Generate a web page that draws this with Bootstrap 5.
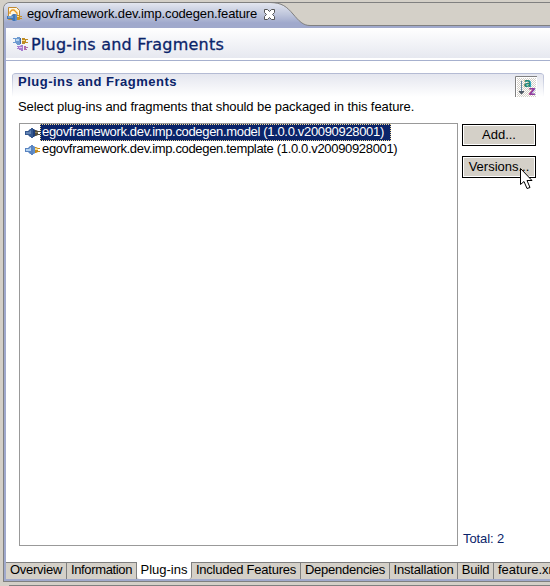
<!DOCTYPE html>
<html lang="en">
<head>
<meta charset="utf-8">
<meta name="viewport" content="width=device-width, initial-scale=1">
<title>Plug-ins and Fragments</title>
<link href="https://cdn.jsdelivr.net/npm/bootstrap@5.3.0/dist/css/bootstrap.min.css" rel="stylesheet">
<style>
  body { width:550px; height:586px; padding-top:2px; background:#d4d0c8; color:#000; font:13px/16px "Liberation Sans", Arial, sans-serif; letter-spacing:-.1px; }
  .editor-frame { height:580px; margin-left:3px; border:1px solid #808080; border-right:0; border-top-left-radius:7px; background:#a0a9cc; }
  .tab-strip { height:23px; background:#d4d0c8; border-bottom:1px solid #808080; border-top-left-radius:6px; }
  .tab-shape { left:0; top:-1px; }
  .file-tab { height:22px; padding-left:3px; }
  .file-name { margin-left:4px; width:230px; letter-spacing:-.12px; }
  .file-close { margin-left:7px; }
  .form-page { height:551px; margin:2px 0 0 2px; background:#fff; }
  .form-head { height:33px; padding-left:7px; background:linear-gradient(#fff,#e6e8f0 94%,#fff 94%); border-bottom:1px solid #a6b0ce; }
  .form-title { margin-left:3px; padding-top:2px; font:16px/30px "DejaVu Sans", sans-serif; letter-spacing:.22px; color:#0a246a; -webkit-text-stroke:.3px #0a246a; }
  .section-head { height:24px; margin:12px 6px 0; padding:2px 6px 0 6px; border-radius:4px 4px 0 0; border-top:1px solid #b4bbd4; background:linear-gradient(#b4bbd4,#fff) left/1px 100% no-repeat, linear-gradient(#b4bbd4,#fff) right/1px 100% no-repeat, linear-gradient(#e4e6ef,#fff); }
  .section-title { font-weight:700; font-size:13px; line-height:12px; letter-spacing:.5px; color:#0a246a; }
  .section-note { margin:2px 0 0 12px; letter-spacing:-.09px; }
  .section-body { margin:8px 0 0 13px; gap:4px; }
  .plugin-list { width:439px; height:423px; border:1px solid #999; }
  .plugin-row { height:17px; padding-left:5px; }
  .plugin-name { height:17px; line-height:15px; padding:0 2px; letter-spacing:-.33px; }
  .plugin-name.chosen { width:351px; background:#0a246a; color:#fff; outline:1px dotted #f5db95; outline-offset:-1px; }
  .side-column { width:74px; padding-top:1px; }
  .push-button { height:22px; padding:0; border:1px solid #000; border-radius:0; box-shadow:inset 0 0 0 1px #fff; background:#d4d0c8; font:inherit; line-height:18px; text-align:center; color:#000; }
  .push-button + .push-button { margin-top:10px; }
  .total { color:#0a246a; margin:0 0 -1px 1px; }
  .page-tabs { height:17px; margin-top:16px; border-top:1px solid #808080; background:#d4d0c8; }
  .page-tab { flex:none; height:16px; border-right:1px solid #808080; line-height:14px; text-align:center; }
  .page-tab.current { height:17px; background:#fff; margin-top:-1px; line-height:16px; border-radius:0 0 3px 3px; }
  .t-overview { width:61px; letter-spacing:-.25px; } .t-info { width:70px; letter-spacing:-.35px; } .t-plug { width:55px; letter-spacing:0; }
  .t-included { width:109px; letter-spacing:-.23px; } .t-dep { width:89px; letter-spacing:-.24px; } .t-inst { width:68px; letter-spacing:-.17px; }
  .t-build { width:36px; letter-spacing:-.3px; } .t-xml { padding-left:4px; letter-spacing:0; }
  .lower-edge { height:1px; margin:3px 0 0 9px; background:#808080; }
  .cursor { left:519px; top:167px; }
</style>
<script src="https://cdn.jsdelivr.net/npm/bootstrap@5.3.0/dist/js/bootstrap.bundle.min.js"></script>
</head>
<body class="overflow-hidden position-relative">
<svg class="d-none">
  <defs>
    <symbol id="plug-dark" viewBox="0 0 15 12"><path d="M0 4h3l2-2h1V1h2v10H6v-1H5L3 8H0z" fill="#35588f"/><path d="M1 5h3l2-2v4H1z" fill="#6484b4"/><path d="M8 2h1l1 1v6L9 10H8z" fill="#1f3f7a"/><path d="M10 3h1l2 1h2v1h-2v2h2v1h-2l-2 1h-1z" fill="#544d3b"/><path d="M10 5h3v1h-3z" fill="#8d8055"/></symbol>
    <symbol id="plug-light" viewBox="0 0 15 12"><path d="M0 4h3l2-2h1V1h2v10H6v-1H5L3 8H0z" fill="#5a84c0"/><path d="M1 5h3l2-2v4H1z" fill="#b3d3f2"/><path d="M8 2h1l1 1v6L9 10H8z" fill="#5f8dca"/><path d="M10 3h1l2 1h2v1h-2v2h2v1h-2l-2 1h-1z" fill="#c48a1c"/><path d="M10 4h1l2 1v1h-3z" fill="#ffe28a"/></symbol>
  </defs>
</svg>
<main class="editor-frame">
  <div class="tab-strip position-relative">
    <svg class="tab-shape position-absolute" width="306" height="26" viewBox="0 0 306 26">
      <defs><linearGradient id="tabfill" x2="0" y2="1"><stop offset="0" stop-color="#e3e6ef"/><stop offset=".45" stop-color="#bfc6dc"/><stop offset=".8" stop-color="#a0a9cc"/></linearGradient></defs>
      <path d="M0 26V7Q0 1 6 1H266C278 1 283 5 289 12S299 23.500 306 23.500V26Z" fill="url(#tabfill)"/>
      <path d="M266 .5C278 .5 283 5 289 12S299 23.500 306 23.500" fill="none" stroke="#808080"/>
    </svg>
    <div class="file-tab position-relative d-flex align-items-center">
      <svg width="16" height="16" viewBox="0 0 16 16">
        <path d="M1.500 1.500h8l3 3v9h-11z" fill="#fff6dd" stroke="#c08a35"/>
        <path d="M3 8V6l2-2h2l3 3v2" fill="none" stroke="#e79a25" stroke-width="1.300"/>
        <path d="M0 10h4l2-2h2v7H6l-2-2H0z" fill="#4377b5"/><path d="M1 10.500h5v1H1z" fill="#a9cdec"/><path d="M8 8h1l1 1v5l-1 1H8z" fill="#5f8dca"/><path d="M10 9h2l1 1h2v1h-2v1h2v1h-2l-1 1h-2z" fill="#c98f22"/><path d="M10 10h2v1h-2z" fill="#ffe28a"/>
      </svg>
      <span class="file-name text-nowrap">egovframework.dev.imp.codegen.feature</span>
      <svg class="file-close" width="11" height="11" viewBox="0 0 11 11"><path d="M.5.5h3l2 2 2-2h3v3l-2 2 2 2v3h-3l-2-2-2 2h-3v-3l2-2-2-2z" fill="#fff" stroke="#555"/></svg>
    </div>
  </div>
  <div class="form-page d-flex flex-column">
    <header class="form-head d-flex align-items-center">
      <svg width="15" height="15" viewBox="0 0 15 15">
        <path d="M0 1h4V0h3v8H4V7H3V6H0V5h2V2H0z" fill="#6f9bd0"/><path d="M3 2h3v2H3z" fill="#b8d5f0"/><path d="M7 1h1v6H7z" fill="#44699f"/>
        <path d="M9 1h3v1h3v1h-2v2h2v1h-3v1H9z" fill="#bf8d25"/><path d="M9 3h3v1H9z" fill="#ffe08a"/>
        <path d="M4 9h3l1-1h2v6H8v-1H6v-1H4v-1h1v-1H4z" fill="#a67bd0"/><path d="M6 10h3v1H6z" fill="#dec3f4"/><path d="M11 9h2v1h2v1h-2v1h1v1h-3z" fill="#b06cae"/>
      </svg>
      <h1 class="form-title mb-0 text-nowrap">Plug-ins and Fragments</h1>
    </header>
    <div class="section-head d-flex justify-content-between">
      <h2 class="section-title mb-0">Plug-ins and Fragments</h2>
      <svg width="23" height="22" viewBox="0 0 23 22">
        <defs><pattern id="dither" width="2" height="2" patternUnits="userSpaceOnUse"><path d="M0 0h2v2H0z" fill="#fff"/><path d="M0 0h1v1H0zM1 1h1v1H1z" fill="#d4d0c8"/></pattern></defs>
        <path d="M0 0h22v21H0z" fill="#fff"/><path d="M2 2h19v19H2z" fill="url(#dither)"/><path d="M.5 21V.5H22" fill="none" stroke="#808080"/>
        <path d="M6.500 5v11" stroke="#6689a5"/><path d="M4 15h5v1L6.500 18.500 4 16z" fill="#4d5965"/>
        <text x="8.500" y="11" font-family="DejaVu Sans" font-size="12" font-weight="700" fill="#23897a">a</text>
        <text x="13.500" y="19" font-family="DejaVu Sans" font-size="12" font-weight="700" fill="#933d9b">z</text>
      </svg>
    </div>
    <p class="section-note mb-0 text-nowrap">Select plug-ins and fragments that should be packaged in this feature.</p>
    <div class="section-body d-flex">
      <div class="plugin-list">
        <div class="plugin-row d-flex align-items-center"><svg width="15" height="12"><use href="#plug-dark"/></svg><span class="plugin-name chosen text-nowrap">egovframework.dev.imp.codegen.model (1.0.0.v20090928001)</span></div>
        <div class="plugin-row d-flex align-items-center"><svg width="15" height="12"><use href="#plug-light"/></svg><span class="plugin-name text-nowrap">egovframework.dev.imp.codegen.template (1.0.0.v20090928001)</span></div>
      </div>
      <div class="side-column d-flex flex-column">
        <button class="btn push-button" type="button">Add...</button>
        <button class="btn push-button" type="button">Versions...</button>
        <div class="total mt-auto">Total: 2</div>
      </div>
    </div>
    <nav class="page-tabs d-flex text-nowrap">
      <span class="page-tab t-overview">Overview</span><span class="page-tab t-info">Information</span><span class="page-tab current t-plug">Plug-ins</span><span class="page-tab t-included">Included Features</span><span class="page-tab t-dep">Dependencies</span><span class="page-tab t-inst">Installation</span><span class="page-tab t-build">Build</span><span class="page-tab t-xml border-0">feature.xml</span>
    </nav>
  </div>
</main>
<div class="lower-edge"></div>
<svg class="cursor position-absolute" width="14" height="23" viewBox="0 0 14 23"><path d="M1.500 1.500v16l3.500-3 3 7 3-1-3-7h5z" fill="#fff" stroke="#000"/></svg>
</body>
</html>
